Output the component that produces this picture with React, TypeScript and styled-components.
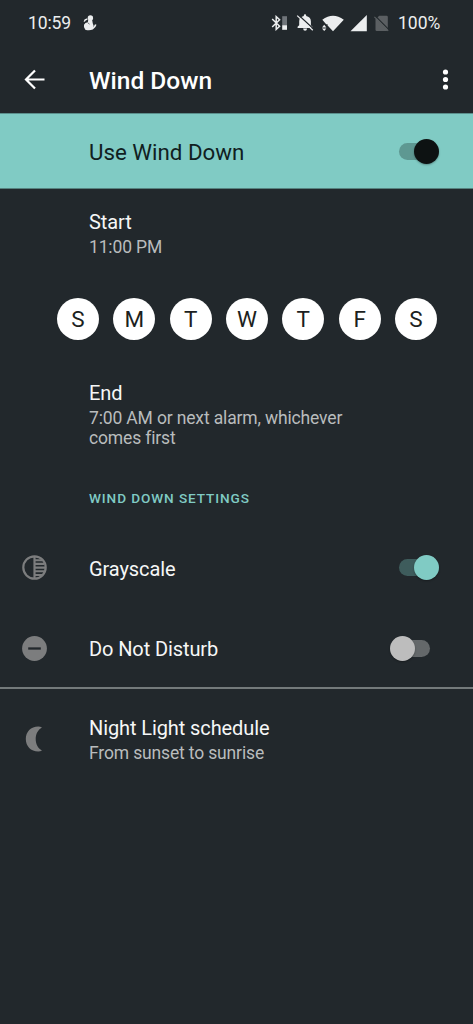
import React from 'react';
import styled, { createGlobalStyle, css } from 'styled-components';

const colors = {
  bg: '#22282c',
  accent: '#80cbc4',
  text: '#f6f7f7',
  muted: '#b9bcbd',
  icon: '#7c7d7e',
};

const GlobalStyle = createGlobalStyle`
  * { box-sizing: border-box; }
  body { margin: 0; background: ${colors.bg}; }
`;

const Screen = styled.main`
  display: flex;
  flex-direction: column;
  width: 473px;
  height: 1024px;
  overflow: hidden;
  background: ${colors.bg};
  color: ${colors.text};
  font-family: Roboto, sans-serif;
`;

const StatusBar = styled.header`
  display: flex;
  align-items: center;
  height: 46px;
  padding: 0 33px 0 28px;
  font-size: 17.5px;
  line-height: 20px;
  color: #eceeef;
`;

const Clock = styled.span`
  width: 55px;
  letter-spacing: -0.1px;
`;

const StatusIcons = styled.div`
  display: flex;
  align-items: center;
  margin-left: auto;
`;

const StatusIcon = styled.svg<{ $gap?: number }>`
  display: block;
  flex: none;
  margin-right: ${({ $gap = 0 }) => $gap}px;
`;

const Battery = styled.span`
  width: 42px;
  white-space: nowrap;
`;

const AppBar = styled.div`
  display: flex;
  align-items: center;
  height: 67px;
  padding: 0 17px 0 23px;
`;

const IconButton = styled.button`
  display: flex;
  padding: 0;
  border: 0;
  background: none;
  color: #fff;
`;

const Title = styled.h1`
  flex: 1;
  margin: 0 0 0 43px;
  padding-top: 2px;
  font-size: 24.5px;
  line-height: 30px;
  font-weight: 500;
  color: #fff;
`;

const Banner = styled.section`
  display: flex;
  align-items: center;
  height: 76px;
  padding: 1px 34px 0 89px;
  background: ${colors.accent};
  border-top: 1px solid #5b8f8c;
  border-bottom: 1px solid #56827f;
  color: #10201f;
`;

const BannerLabel = styled.span`
  flex: 1;
  font-size: 22.3px;
  line-height: 28px;
`;

type Tone = 'dark' | 'accent' | 'off';

const thumbColor = { dark: '#0d1212', accent: colors.accent, off: '#bdbdbd' };
const trackColor = { dark: '#5e9892', accent: '#3e5c5c', off: '#64686a' };

const Switch = styled.button<{ $tone: Tone }>`
  display: flex;
  align-items: center;
  flex: none;
  width: 34px;
  height: 17px;
  padding: 0;
  border: 0;
  border-radius: 9px;
  background: ${({ $tone }) => trackColor[$tone]};
  ${({ $tone }) =>
    $tone === 'off'
      ? css`
          margin-right: 9px;
          justify-content: flex-start;
        `
      : css`
          margin-right: 6px;
          justify-content: flex-end;
        `}
`;

const Thumb = styled.span<{ $tone: Tone }>`
  flex: none;
  width: 25px;
  height: 25px;
  margin: 0 -6px;
  border-radius: 50%;
  background: ${({ $tone }) => thumbColor[$tone]};
  box-shadow: 0 1px 2px rgba(0, 0, 0, 0.3);
`;

const Setting = styled.section<{ $height: number }>`
  display: flex;
  align-items: center;
  height: ${({ $height }) => $height}px;
  padding: 0 34px 0 22px;
`;

const IconSlot = styled.span`
  display: flex;
  flex: none;
  width: 67px;
  color: ${colors.icon};
`;

const SettingText = styled.div`
  flex: 1;
`;

const Label = styled.div`
  font-size: 20px;
  line-height: 26px;
  letter-spacing: -0.1px;

  &:only-child {
    padding-top: 2px;
  }
`;

const Summary = styled.div`
  max-width: 290px;
  padding-top: 2px;
  font-size: 17.5px;
  line-height: 20px;
  letter-spacing: -0.15px;
  color: ${colors.muted};
`;

const Days = styled.div`
  display: flex;
  justify-content: space-between;
  width: 380px;
  margin: 21px 0 0 57px;
`;

const Day = styled.button`
  width: 42px;
  height: 42px;
  padding: 0;
  border: 0;
  border-radius: 50%;
  background: #fff;
  color: #1c1f21;
  font: 400 22.5px/43px Roboto, sans-serif;
`;

const SectionHeading = styled.h2`
  margin: 0;
  padding: 2px 0 0 89px;
  height: 39px;
  font-size: 13.6px;
  line-height: 19px;
  font-weight: 500;
  letter-spacing: 0.9px;
  color: ${colors.accent};
`;

const Divider = styled.hr`
  width: 100%;
  height: 2px;
  margin: 0;
  border: 0;
  background: #747a7b;
`;

const Toggle = ({ tone, label }: { tone: Tone; label: string }) => (
  <Switch $tone={tone} role="switch" aria-checked={tone !== 'off'} aria-label={label}>
    <Thumb $tone={tone} />
  </Switch>
);

const NotificationIcon = () => (
  <StatusIcon width="14" height="16" viewBox="0 0 14 16" fill="currentColor">
    <circle cx="7.4" cy="2.9" r="2.7" />
    <path d="M5.2 5Q7.4 4 9.2 5.2L9.8 8.6Q11 10.6 10.4 12.2L12 9.2L13.5 9.8Q12.8 12.8 9.8 14.6Q6 16 2.3 14.7Q.3 12.7 1 9.8Q2 7.4 4.8 7.2Z" />
    <path d="M1.2 6.6Q1.6 4.6 4.4 4" fill="none" stroke="currentColor" strokeWidth="1.3" />
    <path d="M4.8 7.8L6.6 9.2" stroke={colors.bg} strokeWidth=".6" />
  </StatusIcon>
);

const BluetoothIcon = () => (
  <StatusIcon $gap={9} width="17" height="16" viewBox="0 0 17 16">
    <path d="M2.2 4L9.6 11.3L6.2 14.4V1.6L9.6 4.7L2.2 12" fill="none" stroke="currentColor" strokeWidth="1.5" />
    <path d="M12.2 1.2H17V10.2H12.2z" fill="#70757a" />
    <path d="M12.2 10.2H17V14.8H12.2z" fill="currentColor" />
  </StatusIcon>
);

const BellOffIcon = () => (
  <StatusIcon $gap={8} width="18" height="18" viewBox="0 0 18 18" fill="currentColor">
    <path d="M1.6 14V12.7L3.2 11.2V7.2C3.2 4.4 5 2.5 7.8 2V1.5A1.2 1.2 0 0 1 10.2 1.5V2C13.1 2.5 14.9 4.4 14.9 7.2V11.2L16.4 12.7V14zM7.1 14.6H11.1Q10.9 16.8 9.1 16.8T7.1 14.6z" />
    <path d="M2.2.8L17.6 15" stroke={colors.bg} strokeWidth="1.3" />
    <path d="M1.2 1.6L16.8 16.3" stroke="currentColor" strokeWidth="1.2" />
  </StatusIcon>
);

const WifiIcon = () => (
  <StatusIcon $gap={6} width="22" height="17" viewBox="0 0 22 17" fill="currentColor">
    <path d="M.3 4.7Q11-3.2 21.8 4.7L11 16.2L5.6 10.4V9.2H4.2z" />
    <path d="M0 12.4L2.2 9.8L4.4 12.4zM0 13.5L2.2 16.1L4.4 13.5z" />
  </StatusIcon>
);

const SignalIcon = () => (
  <StatusIcon $gap={7} width="17" height="17" viewBox="0 0 17 17">
    <path d="M.5 16.3L16.8 0V16.3z" fill="currentColor" />
  </StatusIcon>
);

const SimOffIcon = () => (
  <StatusIcon $gap={9} width="15" height="17" viewBox="0 0 15 17">
    <path d="M5.2.8H12.6Q13.8.8 13.8 2V14.8Q13.8 16 12.6 16H2.7Q1.5 16 1.5 14.8V4.5z" fill="#5b5f62" />
    <path d="M1.2.8L14.9 14.7" stroke={colors.bg} strokeWidth="1.2" />
    <path d="M.4 1.8L14.2 15.8" stroke="#5b5f62" strokeWidth="1.2" />
  </StatusIcon>
);

const BackIcon = () => (
  <svg width="23" height="22" viewBox="0 0 23 22" fill="none" stroke="currentColor" strokeWidth="2.2">
    <path d="M12 1.5L3 10.5L12 19.5M3 10.5H21.5" />
  </svg>
);

const MoreIcon = () => (
  <svg width="22" height="22" viewBox="0 0 22 22" fill="currentColor">
    <circle cx="11.5" cy="3" r="2.6" />
    <circle cx="11.5" cy="10.5" r="2.6" />
    <circle cx="11.5" cy="18" r="2.6" />
  </svg>
);

const GrayscaleIcon = () => (
  <svg width="25" height="25" viewBox="0 0 25 25" fill="none" stroke="currentColor">
    <circle cx="12.5" cy="12.5" r="11.2" strokeWidth="2.2" />
    <path d="M12.5 1.5V23.5" strokeWidth="2.2" />
    <path d="M12.5 5.2H20M12.5 8.9H22.5M12.5 12.6H23.5M12.5 16.3H22.5M12.5 20H20" strokeWidth="2.1" />
  </svg>
);

const DndIcon = () => (
  <svg width="25" height="25" viewBox="0 0 25 25">
    <circle cx="12.5" cy="12.5" r="12.4" fill="currentColor" />
    <path d="M6.2 12.5H18.8" stroke={colors.bg} strokeWidth="2.3" />
  </svg>
);

const MoonIcon = () => (
  <svg width="25" height="26" viewBox="0 0 25 26" fill="currentColor">
    <path d="M16.3.5C8.8.5 3.8 5.8 3.8 13S8.8 25.5 16.3 25.5Q18.2 25.5 20 24.6C15.8 22.2 13.7 18 13.7 13S15.8 3.8 20 1.4Q18.2.5 16.3.5z" />
  </svg>
);

const days = ['S', 'M', 'T', 'W', 'T', 'F', 'S'];

export default function App() {
  return (
    <>
      <GlobalStyle />
      <Screen>
        <StatusBar>
          <Clock>10:59</Clock>
          <NotificationIcon />
          <StatusIcons>
            <BluetoothIcon />
            <BellOffIcon />
            <WifiIcon />
            <SignalIcon />
            <SimOffIcon />
            <Battery>100%</Battery>
          </StatusIcons>
        </StatusBar>
        <AppBar>
          <IconButton aria-label="Back"><BackIcon /></IconButton>
          <Title>Wind Down</Title>
          <IconButton aria-label="More options"><MoreIcon /></IconButton>
        </AppBar>
        <Banner>
          <BannerLabel>Use Wind Down</BannerLabel>
          <Toggle tone="dark" label="Use Wind Down" />
        </Banner>
        <Setting $height={88}>
          <IconSlot />
          <SettingText>
            <Label>Start</Label>
            <Summary>11:00 PM</Summary>
          </SettingText>
        </Setting>
        <Days>
          {days.map((day, i) => <Day key={i}>{day}</Day>)}
        </Days>
        <Setting $height={147}>
          <IconSlot />
          <SettingText>
            <Label>End</Label>
            <Summary>7:00 AM or next alarm, whichever comes first</Summary>
          </SettingText>
        </Setting>
        <SectionHeading>WIND DOWN SETTINGS</SectionHeading>
        <Setting $height={83}>
          <IconSlot><GrayscaleIcon /></IconSlot>
          <SettingText><Label>Grayscale</Label></SettingText>
          <Toggle tone="accent" label="Grayscale" />
        </Setting>
        <Setting $height={78}>
          <IconSlot><DndIcon /></IconSlot>
          <SettingText><Label>Do Not Disturb</Label></SettingText>
          <Toggle tone="off" label="Do Not Disturb" />
        </Setting>
        <Divider />
        <Setting $height={99}>
          <IconSlot><MoonIcon /></IconSlot>
          <SettingText>
            <Label>Night Light schedule</Label>
            <Summary>From sunset to sunrise</Summary>
          </SettingText>
        </Setting>
      </Screen>
    </>
  );
}
